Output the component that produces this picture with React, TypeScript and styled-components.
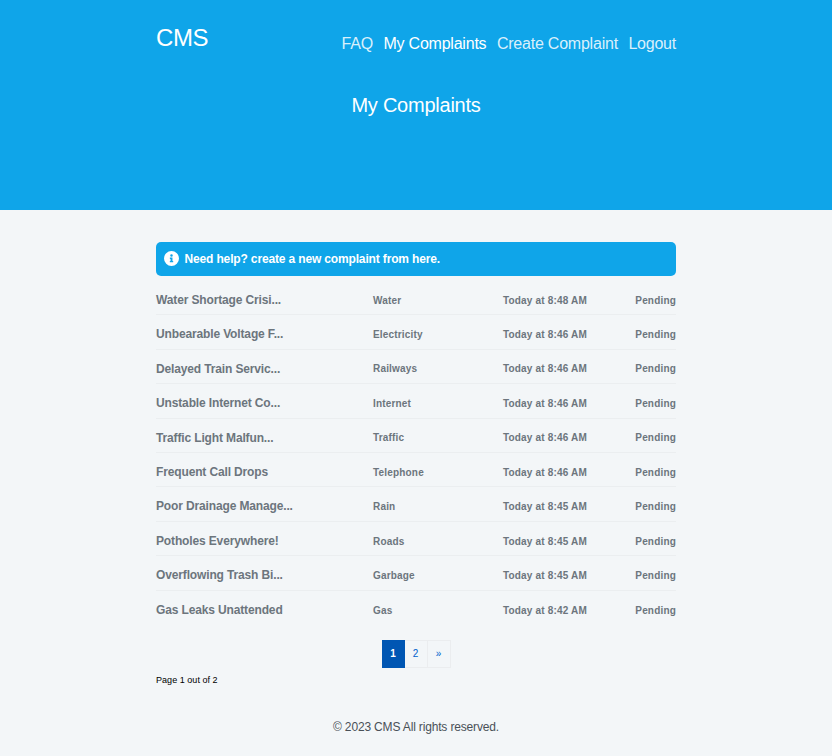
import React from "react";
import styled, { createGlobalStyle } from "styled-components";

const Global = createGlobalStyle`
  * { box-sizing: border-box; }
  body { margin: 0; background: #f3f6f8; font-family: "Liberation Sans", Arial, sans-serif; color: #212529; }
`;
const Page = styled.div`min-height: 756px;`;
const Container = styled.div`width: 520px; margin: 0 auto;`;
const Header = styled.header`height: 210.4px; background: #0fa5e9; color: #fff;`;
const Bar = styled.div`display: flex; justify-content: space-between; padding-top: 24px; height: 93px;`;
const Brand = styled.div`font-size: 24px; line-height: 28px; letter-spacing: -0.4px;`;
const Nav = styled.nav`display: flex; gap: 10.5px; padding-top: 10px;`;
const NavLink = styled.a<{ $active?: boolean }>`
  font-size: 16px; line-height: 19px; white-space: nowrap; letter-spacing: -0.22px;
  color: ${(p) => (p.$active ? "#fff" : "rgba(255,255,255,.85)")};
`;
const Title = styled.h1`
  margin: 0; font-size: 20px; font-weight: 400; line-height: 24px; text-align: center; letter-spacing: -0.24px;
`;
const Alert = styled.div`
  display: flex; align-items: center; gap: 5.5px; height: 34px; margin-top: 31.4px; padding: 0 8px;
  border-radius: 5px; background: #0fa5e9; color: #fff; font-size: 12px; font-weight: 700;
  letter-spacing: -0.15px;
`;
const List = styled.div`margin-top: 5px;`;
const Row = styled.div`
  display: grid; grid-template-columns: 217px 130px 1fr auto; align-items: center;
  height: 34.44px; padding-top: 4.6px; font-weight: 700; color: #6c757d;
  border-bottom: 1px solid #ebeef0;
  &:last-child { border-bottom-color: transparent; }
`;
const Name = styled.span`font-size: 12px; line-height: 14px; letter-spacing: -0.14px;`;
const Detail = styled.span`font-size: 10px; line-height: 12px; letter-spacing: 0.18px; padding-top: 1.6px;`;
const Pager = styled.div`display: flex; justify-content: center; margin-top: 15.2px;`;
const PageItem = styled.a<{ $active?: boolean }>`
  width: 23px; height: 28px; line-height: 26px; text-align: center; font-size: 10px;
  color: ${(p) => (p.$active ? "#fff" : "#0062cc")};
  background: ${(p) => (p.$active ? "#0056b3" : "transparent")};
  font-weight: ${(p) => (p.$active ? 700 : 400)};
  border: 1px solid ${(p) => (p.$active ? "#0056b3" : "#ebedef")};
  & + & { border-left-width: 0; }
`;
const Status = styled.div`margin-top: 6px; font-size: 9px; line-height: 12px; letter-spacing: 0.04px; color: #000;`;
const Footer = styled.footer`
  margin-top: 34px; text-align: center; font-size: 12px; line-height: 14px; letter-spacing: -0.16px; color: #495057;
`;

const rows = [
  ["Water Shortage Crisi...", "Water", "8:48"],
  ["Unbearable Voltage F...", "Electricity", "8:46"],
  ["Delayed Train Servic...", "Railways", "8:46"],
  ["Unstable Internet Co...", "Internet", "8:46"],
  ["Traffic Light Malfun...", "Traffic", "8:46"],
  ["Frequent Call Drops", "Telephone", "8:46"],
  ["Poor Drainage Manage...", "Rain", "8:45"],
  ["Potholes Everywhere!", "Roads", "8:45"],
  ["Overflowing Trash Bi...", "Garbage", "8:45"],
  ["Gas Leaks Unattended", "Gas", "8:42"],
];

export default function App() {
  return (
    <Page>
      <Global />
      <Header>
        <Container>
          <Bar>
            <Brand>CMS</Brand>
            <Nav>
              <NavLink>FAQ</NavLink>
              <NavLink $active>My Complaints</NavLink>
              <NavLink>Create Complaint</NavLink>
              <NavLink>Logout</NavLink>
            </Nav>
          </Bar>
          <Title>My Complaints</Title>
        </Container>
      </Header>
      <Container>
        <Alert>
          <svg width="15" height="15" viewBox="8 8 496 496" fill="#fff">
            <path d="M256 8a248 248 0 1 0 0 496 248 248 0 1 0 0-496zm0 110a42 42 0 1 1 0 84 42 42 0 1 1 0-84zm56 254c0 7-5 12-12 12h-88c-7 0-12-5-12-12v-24c0-7 5-12 12-12h12v-64h-12c-7 0-12-5-12-12v-24c0-7 5-12 12-12h64c7 0 12 5 12 12v100h12c7 0 12 5 12 12z" />
          </svg>
          Need help? create a new complaint from here.
        </Alert>
        <List>
          {rows.map(([name, kind, time]) => (
            <Row key={name}>
              <Name>{name}</Name>
              <Detail>{kind}</Detail>
              <Detail>Today at {time} AM</Detail>
              <Detail>Pending</Detail>
            </Row>
          ))}
        </List>
        <Pager>
          <PageItem $active>1</PageItem>
          <PageItem>2</PageItem>
          <PageItem>»</PageItem>
        </Pager>
        <Status>Page 1 out of 2</Status>
        <Footer>© 2023 CMS All rights reserved.</Footer>
      </Container>
    </Page>
  );
}
